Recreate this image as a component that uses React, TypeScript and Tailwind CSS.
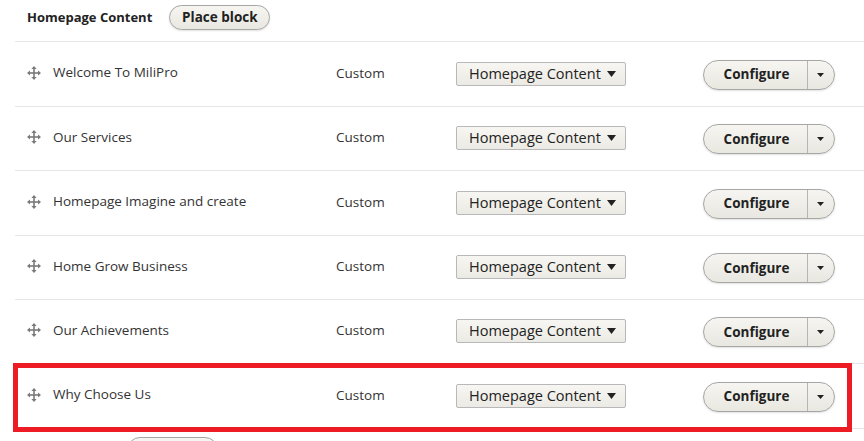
const ROWS = [
  { title: "Welcome To MiliPro", h: "h-[65px]" },
  { title: "Our Services", h: "h-[64px]" },
  { title: "Homepage Imagine and create", h: "h-[65px]" },
  { title: "Home Grow Business", h: "h-[64px]" },
  { title: "Our Achievements", h: "h-[64px]" },
  { title: "Why Choose Us", h: "h-[65px]" },
];

function DragHandle() {
  return (
    <svg width="14" height="14" viewBox="0 0 14 14" className="text-[#7a7a7a]" fill="currentColor">
      <rect x="6.2" y="2" width="1.6" height="10" />
      <rect x="2" y="6.2" width="10" height="1.6" />
      <path d="M7 0 L9.6 3 L4.4 3 Z" />
      <path d="M7 14 L9.6 11 L4.4 11 Z" />
      <path d="M0 7 L3 4.4 L3 9.6 Z" />
      <path d="M14 7 L11 4.4 L11 9.6 Z" />
    </svg>
  );
}

function SelectBox() {
  return (
    <div className="-mt-[1px] flex h-[24px] w-[170px] items-center justify-between rounded-[2px] border border-[#b8b8b8] bg-gradient-to-b from-[#f7f6f2] to-[#ebeae4] pl-[12px] pr-[7px] text-[14.5px] text-[#222]">
      <span>Homepage Content</span>
      <svg width="9" height="6" viewBox="0 0 9 6" className="mr-[2px]">
        <path d="M0 0 L9 0 L4.5 6 Z" fill="#222" />
      </svg>
    </div>
  );
}

function SplitButton() {
  return (
    <div className="flex h-[30px] w-fit items-stretch overflow-hidden rounded-full border border-[#a6a6a6] bg-gradient-to-b from-[#f6f5f1] to-[#e8e7e0] shadow-[0_1px_2px_rgba(0,0,0,0.12)]">
      <span className="flex w-[104px] items-center justify-center border-r border-[#b5b5b5] pl-[2px] text-[13.5px] font-bold text-[#222]">
        Configure
      </span>
      <span className="flex w-[26px] items-center justify-center pr-[2px]">
        <svg width="7" height="4" viewBox="0 0 7 4">
          <path d="M0 0 L7 0 L3.5 4 Z" fill="#222" />
        </svg>
      </span>
    </div>
  );
}

export default function App() {
  return (
    <div className="relative h-[441px] w-[864px] overflow-hidden bg-white font-['Open_Sans',sans-serif] text-[#333]">
      <div className="ml-[15px] flex h-[42px] items-center gap-[17px] border-b border-[#e6e6e6] pb-[6px] pl-[12px]">
        <span className="text-[13px] font-bold text-[#222]">Homepage Content</span>
        <span className="flex h-[25px] w-[101px] items-center justify-center rounded-full border border-[#a6a6a6] bg-gradient-to-b from-[#f6f5f1] to-[#e8e7e0] text-[13.5px] font-bold text-[#222] shadow-[0_1px_2px_rgba(0,0,0,0.12)]">
          Place block
        </span>
      </div>

      {ROWS.map((r) => (
        <div
          key={r.title}
          className={`ml-[15px] grid ${r.h} grid-cols-[26px_283px_120px_170px_auto] items-center border-b border-[#e6e6e6] pl-[12px]`}
        >
          <span className="-mt-[3px] flex items-center">
            <DragHandle />
          </span>
          <span className="-mt-[3px] text-[13.5px] text-[#333]">{r.title}</span>
          <span className="-mt-[2px] text-[13.5px] text-[#333]">Custom</span>
          <SelectBox />
          <span className="ml-[77px] mt-[1px] justify-self-start">
            <SplitButton />
          </span>
        </div>
      ))}

      <div className="ml-[127px] mt-[8px] h-[26px] w-[91px] rounded-full border border-[#a6a6a6] bg-[#f6f5f1]" />

      <div className="pointer-events-none absolute left-[13px] top-[363px] h-[69px] w-[839px] border-[5px] border-[#ed1c24]" />
    </div>
  );
}
